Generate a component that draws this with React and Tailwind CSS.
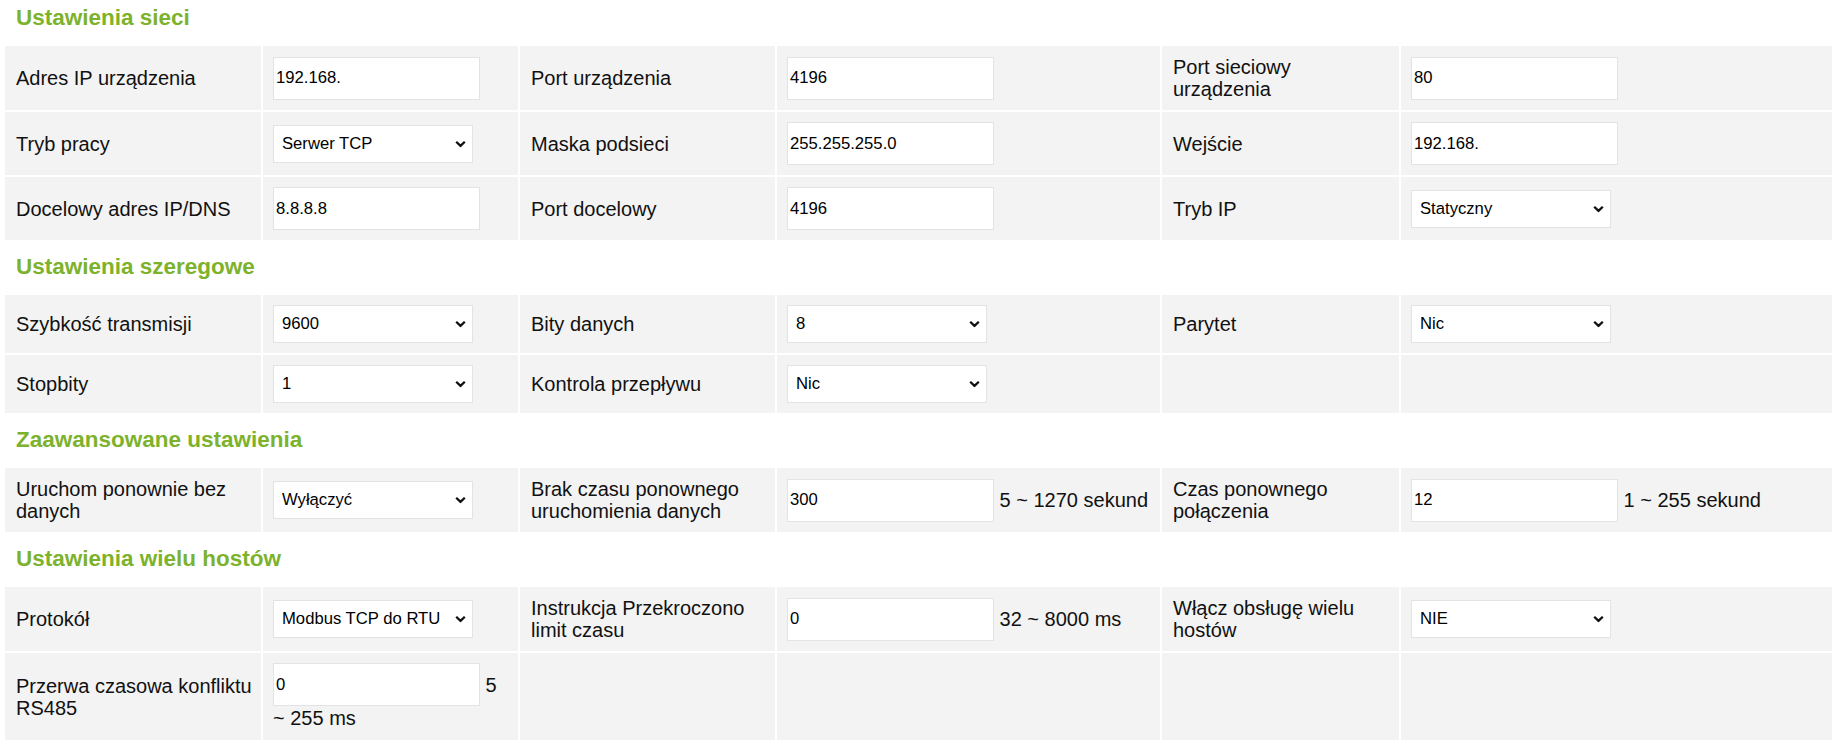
import React from 'react';

// Device config page: network / serial / advanced / multi-host settings

const Input = ({ value }) => (
    <input
        type="text"
        defaultValue={value}
        readOnly
        className="w-[207px] h-[43px] px-[2px] bg-white border border-[#e3e3e3] text-[16.67px] text-black align-middle outline-none"
    />
);

const Select = ({ value }) => (
    <span className="relative inline-block align-middle">
        <select
            defaultValue={value}
            className="appearance-none block w-[200px] h-[38px] pl-[8px] pr-[26px] bg-white border border-[#e3e3e3] text-[16.67px] text-black outline-none"
        >
            <option>{value}</option>
        </select>
        <svg
            className="pointer-events-none absolute right-[7px] top-1/2 -translate-y-1/2"
            width="11"
            height="7"
            viewBox="0 0 11 7"
        >
            <path d="M1.2 1.2 5.5 5.4 9.8 1.2" fill="none" stroke="#111" strokeWidth="2.3" />
        </svg>
    </span>
);

const Field = ({ f }) => {
    if (!f) return null;
    if (f.type === 'select') return <Select value={f.value} />;
    return (
        <span className="whitespace-nowrap">
            <Input value={f.value} />
            {f.suffix && <span className="align-middle"> {f.suffix}</span>}
        </span>
    );
};

const Label = ({ children }) => (
    <td className="bg-[#f3f3f3] pl-[11px] pr-[8px] py-[10px] align-middle text-[20px] leading-[22px] text-[#111]">
        {children}
    </td>
);

const Value = ({ children }) => (
    <td className="bg-[#f3f3f3] px-[10px] py-[10px] align-middle text-[20px] leading-[22px] text-[#111]">
        {children}
    </td>
);

const Section = ({ title, first, rows }) => (
    <>
        <div
            className={`${first ? 'mt-[5px] mb-[13px]' : 'mt-[12px] mb-[13px]'} pl-[16px] h-[26px] leading-[26px] text-[22.5px] font-bold text-[#7cb22c]`}
        >
            {title}
        </div>
        <div className="pl-[3px]">
            <table className="w-full table-fixed border-separate border-spacing-[2px]">
                <colgroup>
                    <col className="w-[256px]" />
                    <col className="w-[255px]" />
                    <col className="w-[255px]" />
                    <col className="w-[383px]" />
                    <col className="w-[237px]" />
                    <col />
                </colgroup>
                <tbody>
                    {rows.map((row, i) => (
                        <tr key={i}>
                            {[0, 1, 2].map((c) => {
                                const cell = row[c];
                                return (
                                    <React.Fragment key={c}>
                                        <Label>{cell ? cell.label : ''}</Label>
                                        <Value>{cell ? (cell.custom || <Field f={cell} />) : ''}</Value>
                                    </React.Fragment>
                                );
                            })}
                        </tr>
                    ))}
                </tbody>
            </table>
        </div>
    </>
);

const network = [
    [
        { label: 'Adres IP urządzenia', value: '192.168.' },
        { label: 'Port urządzenia', value: '4196' },
        { label: 'Port sieciowy urządzenia', value: '80' },
    ],
    [
        { label: 'Tryb pracy', type: 'select', value: 'Serwer TCP' },
        { label: 'Maska podsieci', value: '255.255.255.0' },
        { label: 'Wejście', value: '192.168.' },
    ],
    [
        { label: 'Docelowy adres IP/DNS', value: '8.8.8.8' },
        { label: 'Port docelowy', value: '4196' },
        { label: 'Tryb IP', type: 'select', value: 'Statyczny' },
    ],
];

const serial = [
    [
        { label: 'Szybkość transmisji', type: 'select', value: '9600' },
        { label: 'Bity danych', type: 'select', value: '8' },
        { label: 'Parytet', type: 'select', value: 'Nic' },
    ],
    [
        { label: 'Stopbity', type: 'select', value: '1' },
        { label: 'Kontrola przepływu', type: 'select', value: 'Nic' },
        null,
    ],
];

const advanced = [
    [
        { label: 'Uruchom ponownie bez danych', type: 'select', value: 'Wyłączyć' },
        { label: 'Brak czasu ponownego uruchomienia danych', value: '300', suffix: '5 ~ 1270 sekund' },
        { label: 'Czas ponownego połączenia', value: '12', suffix: '1 ~ 255 sekund' },
    ],
];

const multiHost = [
    [
        { label: 'Protokół', type: 'select', value: 'Modbus TCP do RTU' },
        { label: 'Instrukcja Przekroczono limit czasu', value: '0', suffix: '32 ~ 8000 ms' },
        { label: 'Włącz obsługę wielu hostów', type: 'select', value: 'NIE' },
    ],
    [
        {
            label: 'Przerwa czasowa konfliktu RS485',
            custom: (
                <>
                    <Input value="0" />
                    <span className="align-middle"> 5</span>
                    <br />
                    <span className="inline-block leading-[24px]">~ 255 ms</span>
                </>
            ),
        },
        null,
        null,
    ],
];

export default function App() {
    return (
        <div className="min-h-screen bg-white font-['Liberation_Sans',Arial,sans-serif]">
            <Section first title="Ustawienia sieci" rows={network} />
            <Section title="Ustawienia szeregowe" rows={serial} />
            <Section title="Zaawansowane ustawienia" rows={advanced} />
            <Section title="Ustawienia wielu hostów" rows={multiHost} />
        </div>
    );
}
